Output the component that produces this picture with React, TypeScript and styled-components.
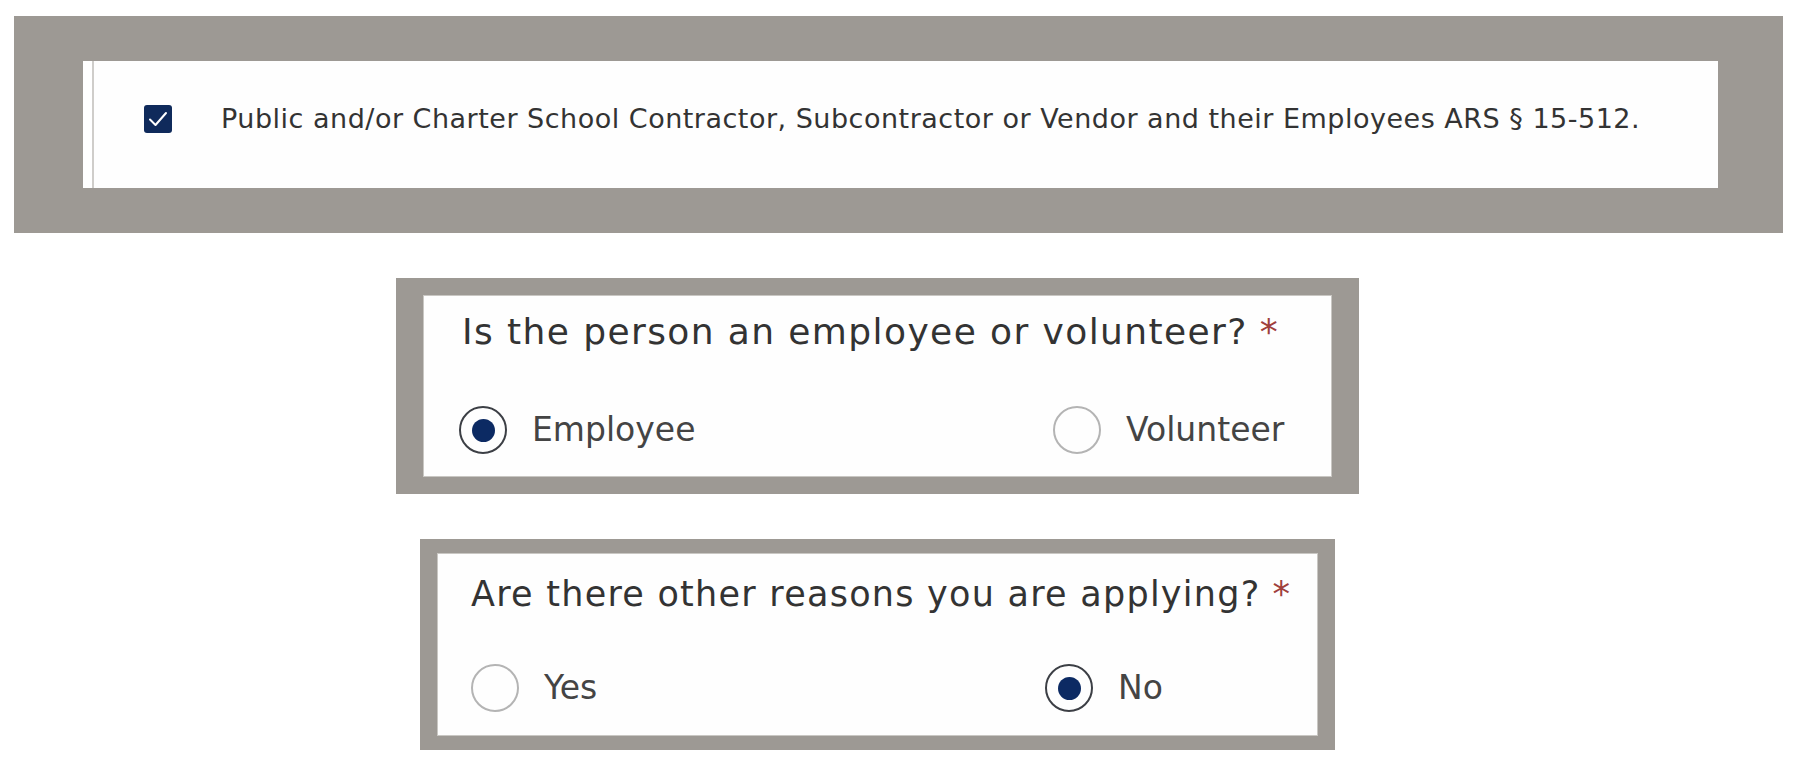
import React from "react";
import styled, { createGlobalStyle } from "styled-components";

const GlobalStyle = createGlobalStyle`
  html, body {
    margin: 0;
    padding: 0;
    background: #ffffff;
  }
  body {
    font-family: "DejaVu Sans", Verdana, sans-serif;
  }
`;

const Page = styled.div`
  display: flex;
  flex-flow: column;
  align-items: center;
  width: 1800px;
  padding-top: 16px;
  gap: 45px;
`;

const Frame = styled.div<{ $pad: string; $shift?: number }>`
  display: flex;
  background: #9d9994;
  padding: ${(p) => p.$pad};
  margin-right: ${(p) => p.$shift || 0}px;
`;

const Panel = styled.div<{ $width: number; $pad: string }>`
  display: flex;
  flex-flow: column;
  width: ${(p) => p.$width}px;
  box-sizing: border-box;
  padding: ${(p) => p.$pad};
  background: #fefefe;
  border: 1px solid #c9c7c3;
`;

const ConsentPanel = styled.div`
  display: flex;
  align-items: center;
  width: 1635px;
  height: 127px;
  box-sizing: border-box;
  background: #fefefe;
  border-left: 9px solid #ffffff;
  box-shadow: inset 2px 0 0 #cfcdca;
  padding: 0 0 12px 52px;
`;

const CheckBox = styled.span`
  display: flex;
  align-items: center;
  justify-content: center;
  width: 28px;
  height: 28px;
  border-radius: 3px;
  background: #0f2a5b;
  flex-shrink: 0;
`;

const ConsentText = styled.span`
  margin-left: 49px;
  font-size: 27px;
  letter-spacing: 0.5px;
  color: #333333;
  white-space: nowrap;
`;

const Question = styled.div<{ $size: number; $track: number; $indent?: number }>`
  font-size: ${(p) => p.$size}px;
  letter-spacing: ${(p) => p.$track}px;
  line-height: 44px;
  padding-left: ${(p) => p.$indent || 0}px;
  color: #333333;
  white-space: nowrap;
`;

const Required = styled.span`
  color: #a0403c;
  margin-left: 12px;
`;

const OptionRow = styled.div<{ $gap: number }>`
  display: flex;
  align-items: center;
  margin-top: ${(p) => p.$gap}px;
`;

const Option = styled.label<{ $width?: number }>`
  display: flex;
  align-items: center;
  gap: 25px;
  width: ${(p) => (p.$width ? `${p.$width}px` : "auto")};
  font-size: 33px;
  line-height: 48px;
  color: #444444;
`;

const Radio = styled.span<{ $checked?: boolean }>`
  display: flex;
  align-items: center;
  justify-content: center;
  width: 48px;
  height: 48px;
  box-sizing: border-box;
  border-radius: 50%;
  border: ${(p) => (p.$checked ? "2px solid #3c3f45" : "2px solid #b4b4b4")};
  flex-shrink: 0;
`;

const Dot = styled.span`
  width: 23px;
  height: 23px;
  border-radius: 50%;
  background: #0c2a63;
`;

const Check = () => (
  <svg width="22" height="22" viewBox="0 0 22 22" fill="none">
    <path
      d="M3 11.5 L8.5 17 L19 5"
      stroke="#ffffff"
      strokeWidth="2"
      strokeLinecap="round"
      strokeLinejoin="round"
    />
  </svg>
);

type Choice = { label: string; checked?: boolean };

const RadioOption = ({ label, checked, width }: Choice & { width?: number }) => (
  <Option $width={width}>
    <Radio $checked={checked}>{checked && <Dot />}</Radio>
    {label}
  </Option>
);

export default function App() {
  return (
    <>
      <GlobalStyle />
      <Page>
        <Frame $pad="45px 65px 45px 69px" $shift={3}>
          <ConsentPanel>
            <CheckBox>
              <Check />
            </CheckBox>
            <ConsentText>
              Public and/or Charter School Contractor, Subcontractor or Vendor
              and their Employees ARS § 15-512.
            </ConsentText>
          </ConsentPanel>
        </Frame>

        <Frame $pad="17px 27px" $shift={45}>
          <Panel $width={909} $pad="14px 0 22px 35px">
            <Question $size={36} $track={1.4} $indent={3}>
              Is the person an employee or volunteer?
              <Required>*</Required>
            </Question>
            <OptionRow $gap={52}>
              <RadioOption label="Employee" checked width={594} />
              <RadioOption label="Volunteer" />
            </OptionRow>
          </Panel>
        </Frame>

        <Frame $pad="14px 17px" $shift={45}>
          <Panel $width={881} $pad="18px 0 23px 33px">
            <Question $size={35} $track={1.25}>
              Are there other reasons you are applying?
              <Required>*</Required>
            </Question>
            <OptionRow $gap={48}>
              <RadioOption label="Yes" width={574} />
              <RadioOption label="No" checked />
            </OptionRow>
          </Panel>
        </Frame>
      </Page>
    </>
  );
}
